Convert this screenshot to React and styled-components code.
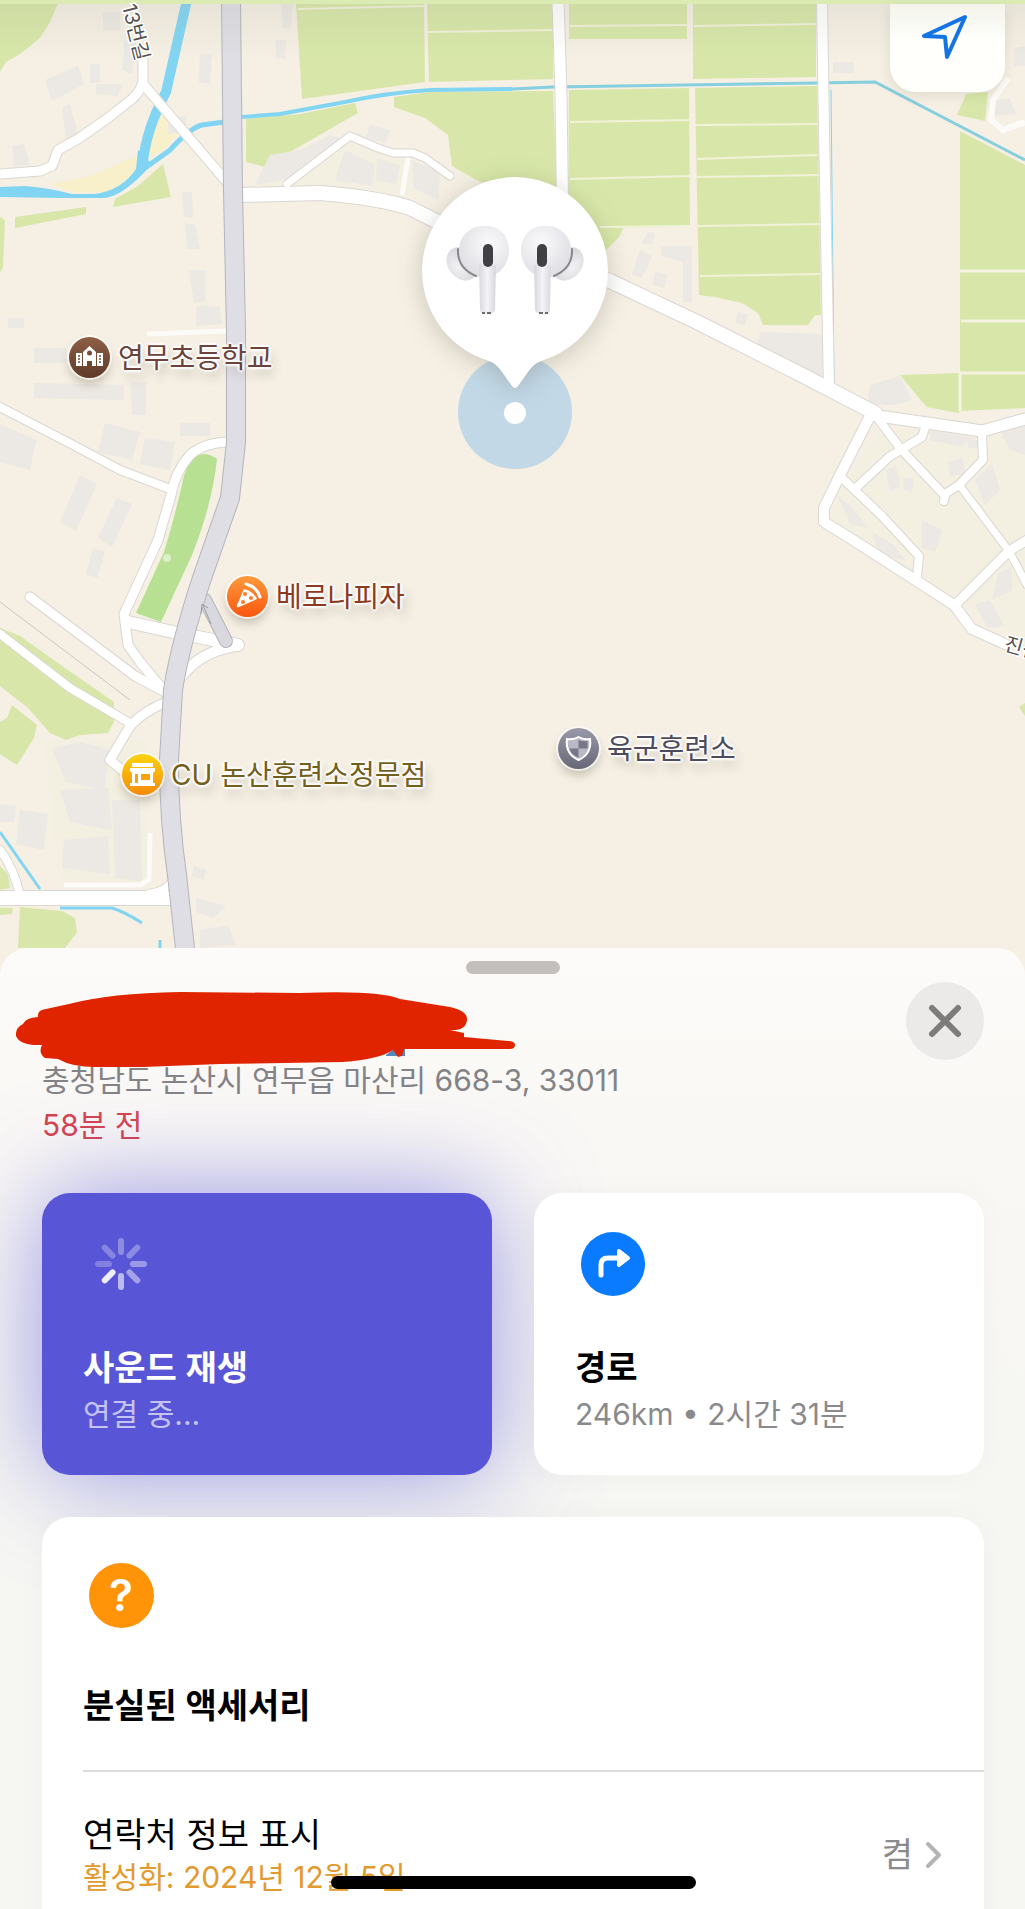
import React, { useState } from "react";
import styled, { createGlobalStyle } from "styled-components";

const GlobalStyle = createGlobalStyle`
  * {
    box-sizing: border-box;
  }
  body {
    margin: 0;
    background: #f6f6f2;
    font-family: Inter, "Noto Sans CJK KR", sans-serif;
    color: #000;
  }
  button {
    font: inherit;
    color: inherit;
    border: none;
    padding: 0;
    background: none;
    text-align: left;
    cursor: pointer;
  }
`;

const fields = [
  "0,3 58,3 50,22 40,38 20,54 6,62 0,72",
  "163,164 171,197 113,207 115,199 138,186",
  "15,217 86,207 86,214 15,228",
  "0,217 5,220 3,268 0,272",
  "296,3 424,3 425,82 302,99",
  "427,3 553,3 553,79 429,82",
  "246,119 300,114 355,103 358,113 330,129 290,152 265,167 246,162",
  "394,97 430,92 553,91 557,190 480,182 452,166 448,135 425,118 394,107",
  "569,3 687,3 687,39 569,39",
  "693,3 816,3 816,77 693,79",
  "569,90 689,88 690,226 623,228 620,236 606,250 568,256",
  "695,88 817,86 821,315 815,315 808,325 763,325 758,313 742,303 715,297 699,295",
  "960,131 1025,165 1025,408 961,411 958,413 927,407 918,397 900,375 960,373",
  "966,94 988,92 985,121 957,115",
  "0,628 20,636 65,668 114,702 114,722 108,733 80,735 66,740 50,733 28,708 0,686",
  "12,705 37,725 34,738 17,765 0,754 0,722 7,718",
  "20,907 62,911 75,918 77,932 65,948 18,948",
  "0,866 8,874 10,888 0,890",
  "0,908 13,908 12,914 0,915",
  "1019,707 1025,703 1025,716",
];

const fieldLines = [
  "427,32 553,30",
  "570,26 687,25",
  "694,26 816,24",
  "570,122 689,120",
  "695,125 817,124",
  "697,159 817,155",
  "570,179 690,176",
  "695,177 819,175",
  "600,227 690,226",
  "697,226 820,224",
  "700,276 820,274",
  "298,9 424,6",
];

const buildings = [
  "45,80 78,66 84,84 52,101",
  "90,64 100,64 100,83 90,83",
  "96,84 122,84 118,96 96,94",
  "103,12 120,12 120,30 103,30",
  "124,40 137,44 132,74 122,70",
  "200,54 212,54 210,84 199,82",
  "281,3 293,3 291,28 283,28",
  "276,40 286,40 285,59 275,58",
  "62,108 70,104 78,135 66,140",
  "12,146 24,144 30,165 14,166",
  "168,118 186,116 186,132 168,134",
  "182,192 192,192 193,218 184,217",
  "185,223 195,225 200,249 187,249",
  "189,270 205,270 206,301 194,303",
  "197,305 220,307 222,324 196,326",
  "34,348 66,348 66,363 34,363",
  "34,383 124,385 124,400 34,398",
  "130,382 146,382 146,415 132,415",
  "8,318 24,318 24,328 8,328",
  "0,424 36,440 30,470 0,462",
  "105,423 140,432 132,460 98,452",
  "145,438 175,442 170,470 140,464",
  "180,423 210,423 210,436 180,436",
  "80,475 97,484 76,531 60,522",
  "117,498 132,504 112,547 98,538",
  "93,548 105,552 97,578 86,574",
  "270,155 300,150 330,135 340,138 300,176 255,185",
  "345,150 375,165 372,186 335,180",
  "377,158 400,166 396,184 376,180",
  "412,160 440,172 438,200 414,188",
  "370,125 390,130 386,143 366,138",
  "648,232 655,233 652,244 642,243",
  "640,250 652,256 642,278 632,275",
  "661,246 692,246 692,302 683,302 683,262 661,256",
  "655,272 667,274 664,288 652,284",
  "738,312 748,314 745,326 735,322",
  "760,332 822,334 822,380 800,370 756,350",
  "833,62 854,62 854,73 833,73",
  "870,385 900,376 912,400 895,405 868,405",
  "930,430 975,438 960,446 930,440",
  "1000,430 1025,426 1025,455 1010,450",
  "948,462 962,458 966,474 950,476",
  "975,480 992,464 1000,490 985,505",
  "886,470 896,466 900,486 890,492",
  "903,478 914,478 912,492 904,490",
  "838,497 850,505 868,528 850,524",
  "872,532 894,545 905,560 880,556",
  "922,520 942,530 935,552 922,548",
  "998,574 1012,566 1012,590 992,600",
  "975,605 990,600 1004,626 988,628",
  "968,440 978,440 978,448 968,448",
  "987,102 1010,98 1016,114 990,116",
  "1014,48 1025,46 1025,66 1014,66",
  "52,748 80,742 110,750 104,790 66,782",
  "60,790 108,788 112,830 70,822",
  "112,800 140,800 142,882 115,878",
  "20,810 48,814 44,850 16,844",
  "64,840 108,836 110,874 62,868",
  "0,804 16,806 14,822 0,822",
  "196,898 226,906 214,918 196,912",
  "200,930 228,925 236,945 200,948",
  "194,866 206,870 204,880 192,876",
];

const streets = [
  { d: "M143 60V84L232 188", w: 9 },
  { d: "M143 82Q140 92 132 99L108 118L78 139L58 150L52 166L40 171L0 174", w: 9 },
  { d: "M287 184L350 136L378 148L393 153L413 153L425 158L450 176", w: 7 },
  { d: "M240 195L320 193Q380 198 410 208L440 223L610 281L697 322L802 375L875 413", w: 14 },
  { d: "M558 0L561 95L563 240", w: 11 },
  { d: "M822 0L824 130L829 390", w: 10 },
  { d: "M0 407L75 446L120 470L170 489", w: 8 },
  { d: "M230 442Q205 442 190 455Q175 472 171 495L158 540L124 614L128 645L140 662L165 692", w: 9 },
  { d: "M30 597L90 642L135 676L165 692", w: 9 },
  { d: "M0 634L70 688L128 722", w: 8 },
  { d: "M167 702Q145 710 130 726L110 760L140 785", w: 9 },
  { d: "M128 622L173 632L238 645", w: 12 },
  { d: "M235 646Q200 652 182 676", w: 10 },
  { d: "M0 850Q14 868 20 896", w: 8 },
  { d: "M0 898H178", w: 14 },
  { d: "M173 880Q165 892 150 893", w: 7 },
  { d: "M870 416L839 477L824 508L824 522L850 538L954 605L972 629L1005 644", w: 10 },
  { d: "M872 415L982 431L1025 419", w: 11 },
  { d: "M876 416L900 448L945 496L944 501", w: 8 },
  { d: "M926 425L922 437L889 457L858 486", w: 8 },
  { d: "M842 478L882 516L919 556L917 577", w: 8 },
  { d: "M982 435L983 460L959 485L945 494", w: 8 },
  { d: "M960 486L1009 551L1027 585", w: 7 },
  { d: "M956 604L1009 551L1027 540", w: 9 },
];

const places = [
  { id: "school", name: "연무초등학교", icon: "school", color: "#6b423c", from: "#8d5f45", to: "#603a28", x: 69, y: 337 },
  { id: "pizza", name: "베로나피자", icon: "pizza", color: "#8c3a20", from: "#fd9a3c", to: "#f9570f", x: 227, y: 576 },
  { id: "cu", name: "CU 논산훈련소정문점", icon: "store", color: "#73601c", from: "#fbd40b", to: "#f58a0c", x: 122, y: 754 },
  { id: "army", name: "육군훈련소", icon: "shield", color: "#4d4c5c", from: "#9a99aa", to: "#686778", x: 558, y: 728 },
];

const MapDrawing = () => (
  <MapSvg viewBox="0 0 1025 976" aria-hidden="true">
    <defs>
      <linearGradient id="shade" x1="0" y1="0" x2="0" y2="1">
        <stop offset="0" stopColor="#8c8c80" stopOpacity="0.13" />
        <stop offset="1" stopColor="#8c8c80" stopOpacity="0" />
      </linearGradient>
    </defs>
    <rect width="1025" height="976" fill="#f5efe4" />
    <path d="M160 98L152 128L148 158L163 150L180 132L170 110ZM50 184L90 176L136 156L138 170L110 192L75 193Z" fill="#f8efcb" />
    <path d="M255 185L350 136L450 176L430 200L320 190ZM880 430L1025 430V640L960 600L830 520L842 490ZM45 740L150 740L150 885L60 880Z" fill="#f1efe0" opacity="0.6" />
    {fields.map((points) => <polygon key={points} points={points} fill="#d8e7a9" />)}
    {fieldLines.map((points) => <polyline key={points} points={points} stroke="#f1f3d8" strokeWidth="2" />)}
    <path d="M960 271H1025M961 321H1025M960 373H1025M960 373V411" stroke="#f4f3e2" strokeWidth="3" />
    <path d="M197 456Q206 451 217 459Q212 505 192 555L161 622L136 613L164 552Q174 520 184 476Q188 462 197 456Z" fill="#b8e092" />
    <circle cx="167" cy="558" r="4" fill="#dcefc8" />
    {buildings.map((points) => <polygon key={points} points={points} fill="#ece8e3" />)}

    {/* water */}
    <path d="M0 187L25 186Q50 188 72 194L95 194Q122 190 136 169L138 150L152 164Q125 195 105 198L60 198L0 197Z" fill="#82d5f2" />
    <g fill="none" stroke="#82d5f2">
      <path d="M187 0L166 92Q146 130 143 162" strokeWidth="10" />
      <path d="M224 122L202 125Q190 128 170 150L145 168" strokeWidth="5" />
      <path d="M242 117L280 114L345 102Q385 93 430 90L512 89" strokeWidth="4" />
      <path d="M512 89L553 87L817 83L875 82L1025 160" strokeWidth="3" stroke="#86cfdf" />
      <path d="M0 832L40 889M60 908L112 908Q125 912 142 923M160 940V952" strokeWidth="3" />
      <path d="M831 90L834 386" strokeWidth="1" />
    </g>
    <path d="M0 602L130 700" stroke="#c9c6be" strokeWidth="1" />

    {/* small lanes without a casing */}
    <g fill="none" stroke="#fcfbf7" strokeWidth="5" strokeLinejoin="round">
      <path d="M408 158L402 195" />
      <path d="M147 334L226 331" />
      <path d="M150 833L149 880L140 885L64 885" />
      <path d="M1008 78L993 100L991 120L1003 130L1025 122" strokeWidth="6" />
    </g>

    <g fill="none" strokeLinejoin="round" strokeLinecap="round">
      {streets.map(({ d, w }) => <path key={d} d={d} stroke="#dbd7d1" strokeWidth={w + 2} />)}
      {streets.map(({ d, w }) => <path key={d} d={d} stroke="#fff" strokeWidth={w} />)}
    </g>

    {/* main road and its ramp */}
    <g fill="none" strokeLinejoin="round">
      <path d="M205 600L226 641" stroke="#b5b4bb" strokeWidth="14" strokeLinecap="round" />
      <path d="M205 600L226 641" stroke="#d9d8de" strokeWidth="12" strokeLinecap="round" />
      <path d="M231 0L233 190L236 330V442L230 498L202 578Q180 645 173 690L169 760Q169 820 177 875L188 976" stroke="#b5b4bb" strokeWidth="20" />
      <path d="M231 0L233 190L236 330V442L230 498L202 578Q180 645 173 690L169 760Q169 820 177 875L188 976" stroke="#dfdee4" strokeWidth="18" />
      <path d="M201 614L202 604L208 608M203 605L211 624" stroke="#9c9ca2" strokeWidth="1" />
    </g>

    <rect width="1025" height="60" fill="url(#shade)" />
    <rect width="1025" height="4" fill="#dcebb4" />
    <StreetName transform="translate(122 6) rotate(76)">13번길</StreetName>
    <StreetName transform="translate(1003 650) rotate(16)">진산</StreetName>
  </MapSvg>
);

const PlaceIcon = ({ name }) => {
  if (name === "school") return (
    <svg width="41" height="41" viewBox="0 0 41 41" fill="#fff" aria-hidden="true">
      <path d="M7 16h6v13H7zM28 16h6v13h-6zM14 15l6.500-6 6.500 6v14h-4v-5h-5v5h-4z" />
      <circle cx="20.500" cy="16" r="2.500" fill="#7a4c38" />
      <path d="M9 19h2M9 22h2M9 25h2M30 19h2M30 22h2M30 25h2" stroke="#7a4c38" strokeWidth="1.500" />
    </svg>
  );
  if (name === "pizza") return (
    <svg width="41" height="41" viewBox="0 0 41 41" aria-hidden="true">
      <path d="M17 13L10 29Q9 32 12 31L30 23Q26 15 17 13Z" fill="#fff" />
      <path d="M19 8Q30 11 33 21" fill="none" stroke="#fff" strokeWidth="3" strokeLinecap="round" />
      <circle cx="18" cy="18" r="2" fill="#fb7a28" />
      <circle cx="24" cy="22" r="2" fill="#fb7a28" />
      <circle cx="16" cy="26" r="2" fill="#fb7a28" />
    </svg>
  );
  if (name === "store") return (
    <svg width="41" height="41" viewBox="0 0 41 41" fill="#fff" aria-hidden="true">
      <path d="M10 9h21v4H10zM8 14h25v3q-1 2-3 2H11q-2 0-3-2zM10 19h21v11H10zM8 29h25v3H8z" />
      <path d="M13 20h3v9h-3zM19 20h9v6h-9z" fill="#f8a30b" />
    </svg>
  );
  return (
    <svg width="41" height="41" viewBox="0 0 41 41" aria-hidden="true">
      <path d="M9 11Q16 12 20.500 9Q25 12 32 11Q34 26 20.500 32Q7 26 9 11Z" fill="#b9b8c4" stroke="#fff" strokeWidth="2" />
      <path d="M20.500 12Q25 14 29.500 13V20.500H20.500ZM11.500 20.500H20.500V29.500Q12 26 11.500 20.500Z" fill="#787788" />
    </svg>
  );
};

const Bud = () => (
  <>
    <ellipse cx="-14" cy="17" rx="14" ry="18" transform="rotate(-38 -14 17)" fill="url(#tip)" />
    <path d="M-17 4C-17 -20 8 -26 22 -18C38 -8 36 18 20 27L8 30L4 30C-6 30 -16 20 -17 4Z" fill="url(#bud)" />
    <path d="M-18 2Q-19 21 0 29" fill="none" stroke="#88888e" strokeWidth="2" strokeLinecap="round" />
    <path d="M3 18H20L19 63Q18 67 11 67Q4 67 4 63Z" fill="url(#stem)" />
    <path d="M6 66H17" stroke="#6b6b70" strokeWidth="2" strokeDasharray="3 2 4" />
    <rect x="7" y="-3" width="10" height="23" rx="5" fill="#414145" />
  </>
);

const DevicePin = () => (
  <svg width="188" height="294" viewBox="0 0 188 294" overflow="visible" aria-hidden="true">
    <defs>
      <radialGradient id="bud" cx="0.6" cy="0.35" r="0.7">
        <stop offset="0" stopColor="#fafafb" />
        <stop offset="1" stopColor="#dedee3" />
      </radialGradient>
      <radialGradient id="tip" cx="0.3" cy="0.5" r="0.8">
        <stop offset="0" stopColor="#f2f2f4" />
        <stop offset="1" stopColor="#cfcfd4" />
      </radialGradient>
      <linearGradient id="stem">
        <stop offset="0" stopColor="#dadade" />
        <stop offset="0.5" stopColor="#f3f3f6" />
        <stop offset="1" stopColor="#d6d6db" />
      </linearGradient>
    </defs>
    <circle cx="94" cy="235" r="57" fill="#c2d8e7" />
    <circle cx="94" cy="236" r="11" fill="#fff" />
    <Bubble d="M94 0A94 94 0 0 1 120 184Q112 187 107 195L97 209Q94 213 91 209L81 195Q76 187 68 184A94 94 0 0 1 94 0Z" />
    <g transform="translate(55 70)"><Bud /></g>
    <g transform="translate(133 70) scale(-1 1)"><Bud /></g>
  </svg>
);

const spokes = [0.32, 0.32, 0.4, 0.45, 0.6, 0.9, 0.25, 0.28];

const Spinner = () => (
  <svg width="54" height="54" viewBox="-27 -27 54 54" aria-hidden="true">
    {spokes.map((opacity, index) => (
      <rect key={index} x="-3" y="-26" width="6" height="17" rx="3" fill="#fff"
        opacity={opacity} transform={`rotate(${index * 45})`} />
    ))}
  </svg>
);

const App = () => {
  const [open, setOpen] = useState(true);

  return (
    <Screen>
      <GlobalStyle />
      <MapArea>
        <MapDrawing />
        {places.map((place) => (
          <Place key={place.id} $x={place.x} $y={place.y} $color={place.color}>
            <Badge $from={place.from} $to={place.to}><PlaceIcon name={place.icon} /></Badge>
            {place.name}
          </Place>
        ))}
        <Pin $x={421} $y={177} aria-label="AirPods Pro"><DevicePin /></Pin>
        <LocateButton aria-label="현재 위치">
          <svg width="48" height="46" viewBox="0 0 48 46" fill="none" stroke="#1474e4" strokeWidth="4" strokeLinejoin="round" aria-hidden="true">
            <path d="M43 3L2 22L23 23L25 43Z" />
          </svg>
        </LocateButton>
      </MapArea>

      {open && (
        <Sheet>
          <Grabber />
          <Header>
            <div>
              <HiddenName>
                <svg width="500" height="78" viewBox="16 990 500 78" fill="#e02400" aria-hidden="true">
                  <path d="M386 1054L395 1047L405 1047V1055H386Z" fill="#5288bd" />
                  <path d="M69 1003Q110 992 180 991L300 992Q380 989 400 998L450 1006Q468 1010 467 1019Q466 1030 450 1029L464 1032V1036L508 1040Q515 1040 515 1044Q515 1048 510 1048H404L402 1055L398 1056L393 1049Q380 1058 343 1061L220 1063L143 1066H95Q72 1066 58 1058L45 1057Q38 1052 42 1044Q20 1045 16 1035Q15 1027 23 1023Q25 1017 38 1016Q37 1009 46 1008Z" />
                </svg>
              </HiddenName>
              <Address>충청남도 논산시 연무읍 마산리 668-3, 33011</Address>
              <LastSeen>58분 전</LastSeen>
            </div>
            <CloseButton aria-label="닫기" onClick={() => setOpen(false)}>
              <svg width="34" height="34" viewBox="0 0 34 34" stroke="#7d7c7b" strokeWidth="6" strokeLinecap="round" aria-hidden="true">
                <path d="M4 4L30 30M30 4L4 30" />
              </svg>
            </CloseButton>
          </Header>

          <Actions>
            <ActionCard $active>
              <IconSlot><Spinner /></IconSlot>
              <CardTitle>사운드 재생</CardTitle>
              <CardNote $active>연결 중...</CardNote>
            </ActionCard>
            <ActionCard>
              <IconSlot>
                <svg width="64" height="64" viewBox="0 0 64 64" aria-hidden="true">
                  <circle cx="32" cy="32" r="32" fill="#0a7aff" />
                  <path d="M20 43V33Q20 26 27 26H38" fill="none" stroke="#fff" strokeWidth="5" strokeLinecap="round" />
                  <path d="M38 19L47 26L38 33Z" fill="#fff" stroke="#fff" strokeWidth="4" strokeLinejoin="round" />
                </svg>
              </IconSlot>
              <CardTitle>경로</CardTitle>
              <CardNote>246km • 2시간 31분</CardNote>
            </ActionCard>
          </Actions>

          <LostCard>
            <IconSlot><QuestionBadge>?</QuestionBadge></IconSlot>
            <LostTitle>분실된 액세서리</LostTitle>
            <Row>
              <span>
                <RowTitle>연락처 정보 표시</RowTitle>
                <RowNote>활성화: 2024년 12월 5일</RowNote>
              </span>
              <RowValue>
                켬
                <svg width="17" height="28" viewBox="0 0 17 28" fill="none" stroke="#b4b4b6" strokeWidth="4" strokeLinecap="round" strokeLinejoin="round" aria-hidden="true">
                  <path d="M3 3L14 14L3 25" />
                </svg>
              </RowValue>
            </Row>
          </LostCard>
        </Sheet>
      )}
      <HomeIndicator />
    </Screen>
  );
};

const Screen = styled.main`
  position: relative;
  height: 100vh;
  overflow: hidden;
`;

const MapArea = styled.section`
  position: relative;
  overflow: hidden;
`;

const MapSvg = styled.svg`
  display: block;
  width: 100%;
`;

const StreetName = styled.text`
  font-size: 20px;
  fill: #55524f;
  stroke: #fff;
  stroke-width: 3px;
  paint-order: stroke;
`;

/* x and y are in the units of the map drawing */
const Marker = styled.button`
  position: absolute;
  left: ${(p) => p.$x / 10.25}%;
  top: ${(p) => p.$y / 9.76}%;
  display: flex;
`;

const Place = styled(Marker)`
  align-items: center;
  gap: 8px;
  font-size: 28px;
  line-height: 40px;
  white-space: nowrap;
  color: ${(p) => p.$color};
  text-shadow: 0 0 2px #fff, 2px 0 2px #fff, -2px 0 2px #fff, 0 2px 2px #fff, 0 -2px 2px #fff, 4px 8px 10px rgba(90, 80, 60, 0.3);
`;

const Pin = styled(Marker)``;

const Badge = styled.span`
  width: 41px;
  height: 41px;
  border-radius: 50%;
  background: linear-gradient(${(p) => p.$from}, ${(p) => p.$to});
  box-shadow: 0 0 0 2px rgba(255, 255, 255, 0.7), 0 6px 10px rgba(90, 80, 60, 0.3);
`;

const Bubble = styled.path`
  fill: #fff;
  filter: drop-shadow(0 4px 12px rgba(80, 80, 60, 0.25));
`;

const LocateButton = styled.button`
  position: absolute;
  top: 4px;
  right: 20px;
  width: 115px;
  height: 88px;
  display: grid;
  place-items: start center;
  padding: 10px 4px 0 0;
  border-radius: 0 0 26px 26px;
  background: linear-gradient(#f4f4ec, #fffffc 40px);
  box-shadow: 0 4px 12px rgba(80, 80, 60, 0.12);
`;

const Sheet = styled.section`
  position: relative;
  margin-top: -28px;
  padding: 13px 41px 0 42px;
  border-radius: 28px 28px 0 0;
  background: linear-gradient(#fdfbf9, #faf8f5 180px, #f6f6f3 500px);
`;

const Grabber = styled.div`
  width: 94px;
  height: 13px;
  margin: 0 auto;
  border-radius: 7px;
  background: #c2bfbc;
`;

const Header = styled.header`
  display: flex;
  justify-content: space-between;
  padding: 8px 0 45px;
`;

const HiddenName = styled.div`
  position: relative;
  height: 76px;

  svg {
    position: absolute;
    left: -26px;
    top: 9px;
  }
`;

const Address = styled.p`
  margin: 0;
  font-size: 30px;
  line-height: 45px;
  color: #848386;
`;

const LastSeen = styled(Address)`
  color: #d6444f;
`;

const CloseButton = styled.button`
  flex: none;
  display: grid;
  place-items: center;
  width: 78px;
  height: 78px;
  border-radius: 50%;
  background: #ebeae9;
`;

const Actions = styled.div`
  display: grid;
  grid-template-columns: 1fr 1fr;
  gap: 42px;
`;

const ActionCard = styled.button`
  display: flex;
  flex-direction: column;
  min-height: 282px;
  padding: 33px 42px 38px 41px;
  border-radius: 28px;
  color: ${(p) => (p.$active ? "#fff" : "#000")};
  background: ${(p) => (p.$active ? "#5856d6" : "#fff")};
  box-shadow: ${(p) => (p.$active ? "0 0 100px rgba(88, 86, 214, 0.6)" : "0 0 30px rgba(0, 0, 0, 0.03)")};
`;

const IconSlot = styled.span`
  display: grid;
  place-items: center;
  width: 76px;
  height: 76px;
`;

const CardTitle = styled.span`
  margin-top: auto;
  font-size: 34px;
  line-height: 46px;
  font-weight: 600;
`;

const CardNote = styled.span`
  font-size: 30px;
  line-height: 46px;
  color: ${(p) => (p.$active ? "#c4c3f2" : "#8a8a8d")};
`;

const LostCard = styled.section`
  position: relative;
  margin-top: 42px;
  padding: 40px 0 60px 41px;
  border-radius: 28px;
  background: #fff;
  box-shadow: 0 0 30px rgba(0, 0, 0, 0.03);
`;

const QuestionBadge = styled.span`
  display: grid;
  place-items: center;
  width: 65px;
  height: 65px;
  border-radius: 50%;
  background: #ff9409;
  color: #fff;
  font-size: 44px;
  line-height: 65px;
  font-weight: 600;
`;

const LostTitle = styled.h2`
  margin: 50px 0 41px;
  font-size: 34px;
  line-height: 46px;
  font-weight: 600;
`;

const Row = styled.button`
  display: flex;
  align-items: center;
  justify-content: space-between;
  width: 100%;
  padding: 41px 42px 0 0;
  border-top: 2px solid #dcdcde;
`;

const RowTitle = styled.span`
  display: block;
  font-size: 34px;
  line-height: 44px;
`;

const RowNote = styled(RowTitle)`
  font-size: 30px;
  line-height: 40px;
  color: #e29a2e;
`;

const RowValue = styled.span`
  display: flex;
  align-items: center;
  gap: 12px;
  font-size: 34px;
  line-height: 44px;
  color: #8a8a8d;
`;

const HomeIndicator = styled.div`
  position: absolute;
  left: 50%;
  bottom: 20px;
  width: 365px;
  height: 13px;
  margin-left: -182px;
  border-radius: 7px;
  background: #000;
`;

export default App;
